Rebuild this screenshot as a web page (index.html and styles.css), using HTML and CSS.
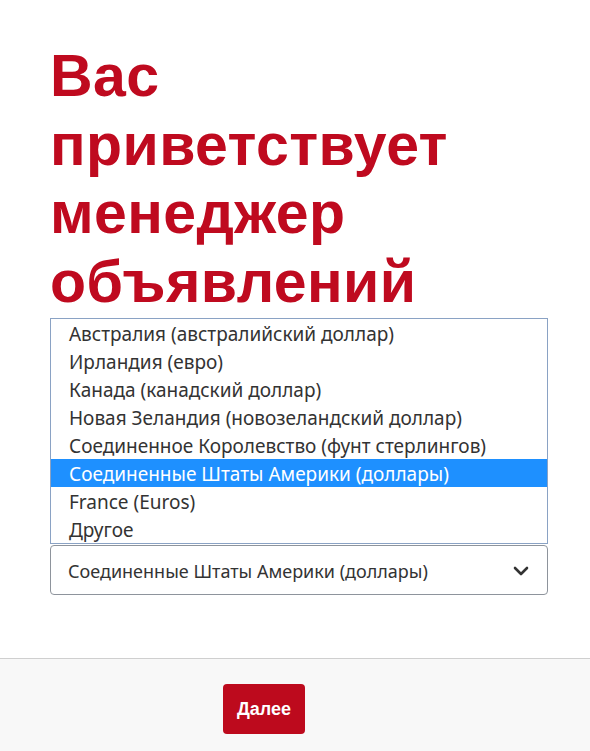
FILE: index.html
```html
<!DOCTYPE html>
<html lang="ru">
<head>
<meta charset="utf-8">
<title>Менеджер объявлений</title>
<link rel="stylesheet" href="styles.css">
</head>
<body>
<main class="page">
  <h1 class="title">Вас приветствует менеджер объявлений</h1>
  <div class="covered"></div>
  <div class="select-wrap">
    <ul class="listbox">
      <li class="option">Австралия (австралийский доллар)</li>
      <li class="option">Ирландия (евро)</li>
      <li class="option">Канада (канадский доллар)</li>
      <li class="option">Новая Зеландия (новозеландский доллар)</li>
      <li class="option">Соединенное Королевство (фунт стерлингов)</li>
      <li class="option selected">Соединенные Штаты Америки (доллары)</li>
      <li class="option">France (Euros)</li>
      <li class="option">Другое</li>
    </ul>
    <div class="select">
      <span class="select-value">Соединенные Штаты Америки (доллары)</span>
      <svg class="chevron" width="16" height="10" viewBox="0 0 16 10"><path d="M2 2 L8 8 L14 2" fill="none" stroke="#333" stroke-width="2.6" stroke-linecap="round" stroke-linejoin="round"/></svg>
    </div>
  </div>
</main>
<footer class="footer">
  <button class="next">Далее</button>
</footer>
</body>
</html>
```
FILE: styles.css
```css
html, body {
  margin: 0;
  padding: 0;
  background: #fff;
}
body {
  width: 590px;
  height: 751px;
  overflow: hidden;
  font-family: "Noto Sans", "Open Sans", sans-serif;
  display: flex;
  flex-direction: column;
}
.page {
  padding: 42px 42px 0 50px;
  height: 658px;
  flex: none;
  box-sizing: border-box;
}
.title {
  margin: 0 0 3px;
  font-family: "Liberation Sans", Arial, sans-serif;
  font-weight: 700;
  font-size: 59px;
  letter-spacing: 0.4px;
  line-height: 68.5px;
  color: #bf0a1f;
  width: 440px;
}
.covered {
  height: 226px;
}
.select-wrap {
  position: relative;
}
.listbox {
  position: absolute;
  left: 0;
  right: 0;
  bottom: 100%;
  margin: 0 0 1px;
  padding: 0;
  list-style: none;
  background: #fff;
  border: 1px solid #8aa2c4;
  z-index: 2;
}
.option {
  height: 28px;
  box-sizing: border-box;
  padding-top: 2px;
  line-height: 26px;
  padding-left: 18px;
  font-size: 19px;
  color: #333;
  white-space: nowrap;
}
.option.selected {
  background: #1e90ff;
  color: #fff;
}
.select {
  height: 50px;
  box-sizing: border-box;
  border: 1px solid #8e949c;
  border-radius: 4px;
  display: flex;
  align-items: center;
  justify-content: space-between;
  padding: 2px 18px 0 17px;
  font-size: 18px;
  color: #333;
}
.chevron {
  display: block;
}
.footer {
  flex: 1;
  border-top: 1px solid #cfcfcf;
  background: #f8f8f8;
  padding: 25px 0 0 223px;
}
.next {
  width: 82px;
  height: 50px;
  border: none;
  border-radius: 4px;
  background: #bd0a1d;
  color: #fff;
  font-family: "Liberation Sans", Arial, sans-serif;
  font-weight: 700;
  font-size: 18px;
  padding: 0;
}
```
